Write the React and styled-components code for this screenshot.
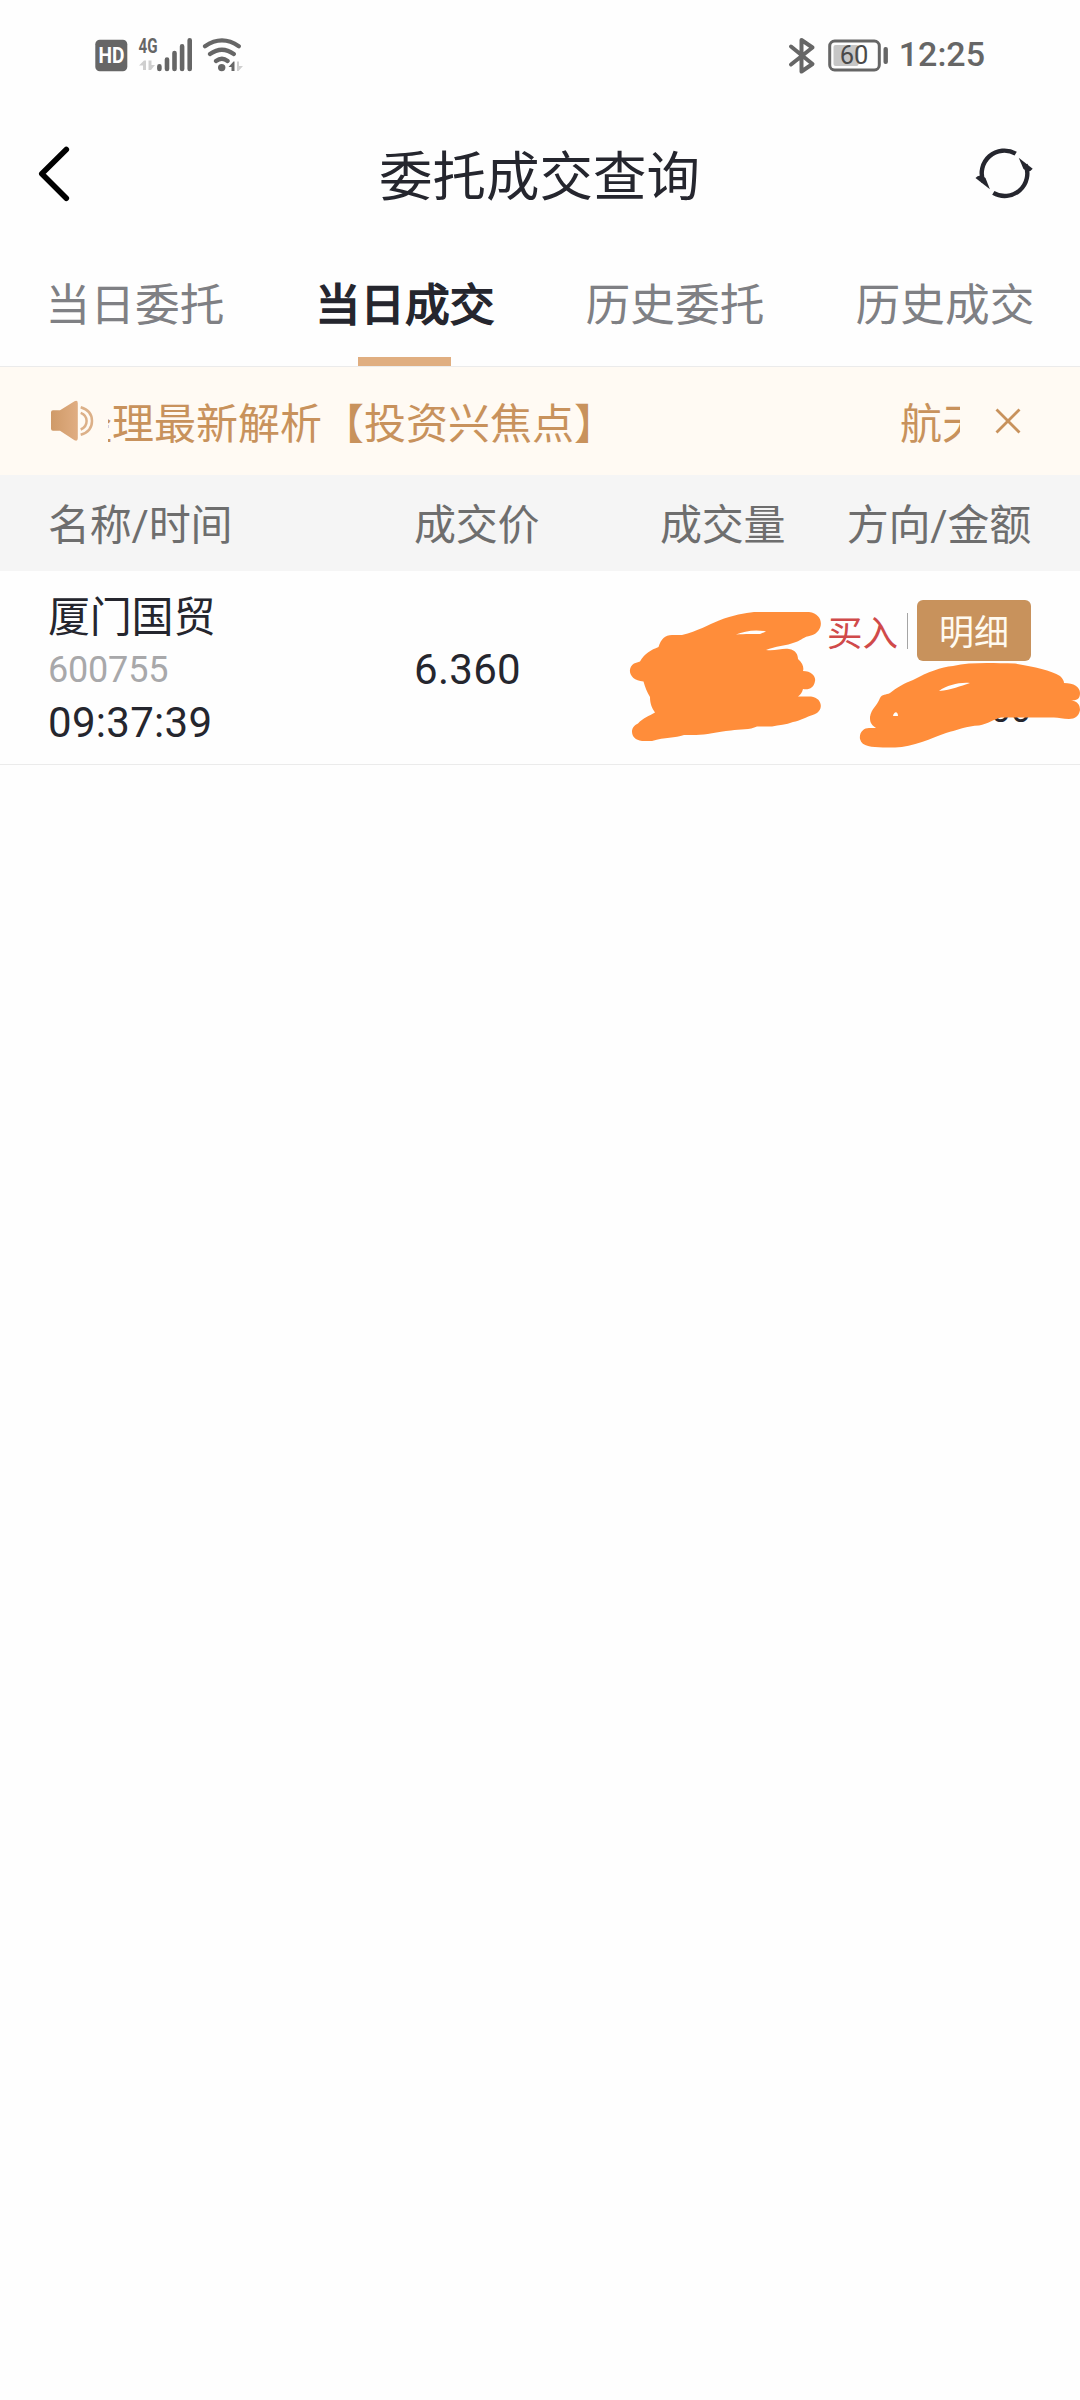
import React from 'react'
import styled, { createGlobalStyle } from 'styled-components'

const INK = '#25262e'
const STATUS_GREY = '#666666'
const BRONZE = '#c8925c'
const MARKER = '#ff8d3a'

const GlobalStyle = createGlobalStyle`
  * {
    box-sizing: border-box;
  }

  body {
    margin: 0;
    background: #fefefe;
    color: ${INK};
    font-family: Roboto, 'Noto Sans CJK SC', sans-serif;
  }
`

const Page = styled.div`
  width: 1080px;
  height: 2400px;
  overflow: hidden;
`

const StatusBar = styled.div`
  display: flex;
  justify-content: space-between;
  height: 110px;
  padding: 0 95px;
`

const StatusGroup = styled.div`
  display: flex;
  align-items: center;
  height: 109px;
  color: ${STATUS_GREY};
`

const Clock = styled.div`
  margin-left: 10px;
  font-size: 34px;
  font-weight: 500;
  line-height: 109px;
`

const TitleBar = styled.header`
  display: grid;
  grid-template-columns: 120px 1fr 120px;
  align-items: center;
  height: 128px;
`

const Title = styled.h1`
  margin: 0;
  padding: 8px 1px 0 0;
  font-size: 53.5px;
  font-weight: 400;
  line-height: 120px;
  text-align: center;
`

const IconButton = styled.button`
  display: flex;
  justify-content: ${props => props.$end ? 'flex-end' : 'flex-start'};
  padding: ${props => props.$end ? '0 46px 0 0' : '0 0 0 36px'};
  border: 0;
  background: none;
`

const Tabs = styled.nav`
  display: grid;
  grid-template-columns: repeat(4, 1fr);
  height: 129px;
  border-bottom: 1px solid #ebebeb;
`

const Tab = styled.div`
  display: flex;
  flex-direction: column;
  align-items: center;
  justify-content: space-between;
  height: 128px;
  color: ${props => props.$active ? INK : '#7f8084'};
  font-size: 44.7px;
  line-height: 137px;
  -webkit-text-stroke: ${props => props.$active ? '1.7px' : '0'};

  span {
    height: 119px;
  }
`

const Indicator = styled.div`
  width: 93px;
  height: 9px;
  margin-right: 1px;
  background: #e0ae80;
`

const Notice = styled.div`
  display: flex;
  align-items: center;
  height: 108px;
  padding: 0 58px 0 48px;
  background: #fffaf3;
  color: ${BRONZE};
`

const Marquee = styled.div`
  display: flex;
  justify-content: space-between;
  width: 852px;
  height: 108px;
  margin: 0 34px 0 12px;
  overflow: hidden;
  font-size: 42px;
  line-height: 115px;
  white-space: nowrap;
`

const Passing = styled.span`
  margin-left: -38px;
`

const Upcoming = styled.span`
  width: 60px;
  overflow: hidden;
`

const Columns = styled.div`
  display: grid;
  grid-template-columns: 366px 246px 1fr 1fr;
  padding: 0 49px 0 48px;
`

const TableHead = styled(Columns)`
  height: 96px;
  background: #f5f5f5;
  color: #6e6e6e;
  font-size: 42px;
  line-height: 101px;
`

const HeadCell = styled.div`
  text-align: ${props => props.$right ? 'right' : 'left'};
  letter-spacing: -0.2px;
  white-space: nowrap;
`

const Trade = styled(Columns)`
  position: relative;
  height: 194px;
  border-bottom: 1px solid #ebebeb;
`

const Stock = styled.div`
  display: flex;
  flex-direction: column;
  padding-top: 19px;
  font-size: 42px;
  line-height: 56px;
`

const Name = styled.span`
  letter-spacing: -0.2px;
`

const Code = styled.span`
  margin-bottom: 1px;
  color: #a8a8aa;
  font-size: 36px;
  letter-spacing: -0.2px;
  line-height: 48px;
`

const Time = styled.span`
  letter-spacing: 0.3px;
`

const Price = styled.div`
  font-size: 42px;
  letter-spacing: 0.3px;
  line-height: 198px;
`

const Side = styled.div`
  grid-column: 4;
  display: flex;
  flex-direction: column;
  align-items: flex-end;
  padding-top: 29px;
`

const SideRow = styled.div`
  display: flex;
  align-items: center;
  height: 61px;
`

const Direction = styled.span`
  padding-top: 7px;
  color: #d04a4a;
  font-size: 35.5px;
  line-height: 54px;
  white-space: nowrap;
`

const Divider = styled.span`
  width: 1px;
  height: 36px;
  margin: 0 9px;
  background: #a5a5a5;
`

const DetailButton = styled.button`
  width: 114px;
  height: 61px;
  padding: 7px 0 0;
  border: 0;
  border-radius: 6px;
  background: ${BRONZE};
  color: #fffaf0;
  font-family: inherit;
  font-size: 35px;
  line-height: 54px;
`

const Amount = styled.span`
  margin-top: 23px;
  font-size: 36px;
  line-height: 52px;
`

const Scribbles = styled.svg`
  position: absolute;
  left: 600px;
  top: 9px;
`

const NetworkIcons = () => (
  <svg width="150" height="40" viewBox="95 34 150 40" fill={STATUS_GREY}>
    <rect x="95.3" y="38.7" width="32" height="31.6" rx="4.5" />
    <text x="111.4" y="62.2" textAnchor="middle" fill="#fff" fontSize="22.5" fontWeight="700" textLength="26" lengthAdjust="spacingAndGlyphs">HD</text>
    <text x="138.6" y="51.8" fontSize="20" fontWeight="700" textLength="19" lengthAdjust="spacingAndGlyphs">4G</text>
    <path d="M139 64.5l5-5h2V69h-3v-4.5zM148.500 59.500h3V64h3.500l-4 5h-2.500z" fill="#cfcfcf" />
    <g stroke={STATUS_GREY} strokeWidth="4.600" strokeLinecap="round">
      <path d="M159.400 65.400V68M167 58.500V68M174.500 52V68M182.100 45.400V68M189.700 39.200V68" />
    </g>
    <g stroke={STATUS_GREY} strokeWidth="4.200" strokeLinecap="round" fill="none">
      <path d="M205 45.200Q222 33.500 238.800 45.200M210 53Q222 44.500 233.800 53M216 60Q222 55.500 227.600 60" />
    </g>
    <circle cx="221.700" cy="66.600" r="3.700" />
    <path d="M228.500 66l5-5.500h1V70h-3v-4z" />
    <path d="M237 60.500h2V65h4l-4.500 5H237z" fill="#cfcfcf" />
  </svg>
)

const PowerIcons = () => (
  <svg width="102" height="40" viewBox="788 34 102 40">
    <path d="M792 45.500L813.500 63l-11 7.500V39l11 7.500L792 63.500" fill="none" stroke={STATUS_GREY} strokeWidth="4" strokeLinecap="round" strokeLinejoin="round" />
    <rect x="830.700" y="40" width="49.600" height="29" rx="5" fill="none" stroke={STATUS_GREY} strokeWidth="3" />
    <rect x="834.500" y="44" width="25" height="21" rx="2" fill="#c6c6c6" />
    <text x="855" y="62.800" textAnchor="middle" fill="#4a4a4a" fontSize="25.500">60</text>
    <rect x="884.500" y="46" width="4.400" height="17" rx="2" fill={STATUS_GREY} />
  </svg>
)

const BackIcon = () => (
  <svg width="36" height="60" viewBox="36 144 36 60" fill="none" stroke="#000" strokeWidth="5.600" strokeLinecap="round" strokeLinejoin="round">
    <path d="M66.300 149.500L41.800 173.800L66.300 198.200" />
  </svg>
)

const RefreshIcon = () => (
  <svg width="60" height="56" viewBox="974 146 60 56">
    <g fill="none" stroke={INK} strokeWidth="4.400">
      <path d="M1015.700 153.700A22.600 22.600 0 0 0 983.500 182M993.300 192.900A22.600 22.600 0 0 0 1025.500 164.500" />
    </g>
    <path d="M1018.700 157.800L1032.700 168.800Q1031 171.500 1027.500 171.500L1023.500 169z" fill={INK} />
    <path d="M989.900 189.300L975.500 178Q977.500 175 981.500 175.500L985.500 178z" fill={INK} />
  </svg>
)

const SpeakerIcon = () => (
  <svg width="48" height="48" viewBox="48 397 48 48">
    <defs>
      <linearGradient id="horn" x1="0" x2="1">
        <stop offset="0" stopColor="#cf9a68" />
        <stop offset="1" stopColor="#e0ad82" />
      </linearGradient>
    </defs>
    <path d="M53 410.300h7L74.500 401.200q3.300-1.500 3.300 2v35q0 3.500-3.300 2L60 430.700h-7q-2 0-2-2v-16.400q0-2 2-2z" fill="url(#horn)" />
    <g fill="none" stroke="#dcb088" strokeWidth="2.500">
      <path d="M80.700 407.200Q92 410.500 92 421Q92 431.500 80.700 434.800M80.700 412.800Q86.600 415 86.600 421Q86.600 427 80.700 429.500" />
    </g>
  </svg>
)

const CloseIcon = () => (
  <svg width="28" height="28" viewBox="0 0 28 28" stroke={BRONZE} strokeWidth="2.800">
    <path d="M2.500 2.500l23 23M25.500 2.500l-23 23" />
  </svg>
)

// marker strokes hiding the quantity and the amount
const Marks = () => (
  <Scribbles width="480" height="180" viewBox="600 580 480 180" fill={MARKER}>
    <path
      fillRule="evenodd"
      d="M640 661.500C645 653 651 650 658.500 647C661 639 665 635 672 635H682C698 631 708 625 719 620.500C733 615 745 613 754 612H809C825 614 824 632 811 635.500C803 637 802 640 796 642C786 646 775 646 766 650C776 651 782 648 789 649C796 650 798 655 798 659C803 663 804 668 803 671C812 671 816 677 815 681C814 688 809 690 803 689C802 693 800 695 798 696.500H811C823 698 824 711 814 714.500C806 717 800 721 793 722C786 725 779 725 772 726.500H757C750 730 740 729 731 730.500C717 732 706 735 696 735H684C675 738 665 737 652 741H642C630 740 629 727 638 723.500C643 718 649 716 655 712.500C652 708 650 704 650 697C647 692 645 687 643.500 681.500C630 681 626 669 634 663.500zM736 634.500C745 634 755 634 760 634L766 631.500C756 629 744 631 736 634.500z"
    />
    <path
      fillRule="evenodd"
      d="M880 698C882 694 886 695 890 693C896 688 905 683 913 680C928 672 941 667 953 666C970 662 990 663 1015 663.500C1034 667 1051 670 1060 676C1063 679 1064 681 1064 683C1074 683 1080 687 1080 693C1080 699 1077 701 1070 700C1077 701 1080 704 1080 710C1079 716 1075 719 1069 719C1062 719 1058 717 1052 717.500H1001C994 719 988 724 979 725.500C967 726 957 730 946 733C932 738 913 747 895 747.500H883C872 747 862 747 860 739C859 732 864 728 869 728H876C870 724 870 721 870 717C871 709 877 706 880 698zM939 691C947 685 960 682 970 683C960 686 952 690 939 691zM893 716C894 711 898 711 898 716z"
    />
  </Scribbles>
)

const TABS = ['当日委托', '当日成交', '历史委托', '历史成交']
const ACTIVE_TAB = 1

function App () {
  return (
    <Page>
      <GlobalStyle />
      <StatusBar>
        <StatusGroup>
          <NetworkIcons />
        </StatusGroup>
        <StatusGroup>
          <PowerIcons />
          <Clock>12:25</Clock>
        </StatusGroup>
      </StatusBar>
      <TitleBar>
        <IconButton aria-label="返回"><BackIcon /></IconButton>
        <Title>委托成交查询</Title>
        <IconButton $end aria-label="刷新"><RefreshIcon /></IconButton>
      </TitleBar>
      <Tabs>
        {TABS.map((label, i) => (
          <Tab key={label} $active={i === ACTIVE_TAB}>
            <span>{label}</span>
            {i === ACTIVE_TAB && <Indicator />}
          </Tab>
        ))}
      </Tabs>
      <Notice>
        <SpeakerIcon />
        <Marquee>
          <Passing>经理最新解析【投资兴焦点】</Passing>
          <Upcoming>航天</Upcoming>
        </Marquee>
        <CloseIcon />
      </Notice>
      <TableHead>
        <HeadCell>名称/时间</HeadCell>
        <HeadCell>成交价</HeadCell>
        <HeadCell>成交量</HeadCell>
        <HeadCell $right>方向/金额</HeadCell>
      </TableHead>
      <Trade>
        <Stock>
          <Name>厦门国贸</Name>
          <Code>600755</Code>
          <Time>09:37:39</Time>
        </Stock>
        <Price>6.360</Price>
        <Side>
          <SideRow>
            <Direction>买入</Direction>
            <Divider />
            <DetailButton>明细</DetailButton>
          </SideRow>
          <Amount>.00</Amount>
        </Side>
        <Marks />
      </Trade>
    </Page>
  )
}

export default App
